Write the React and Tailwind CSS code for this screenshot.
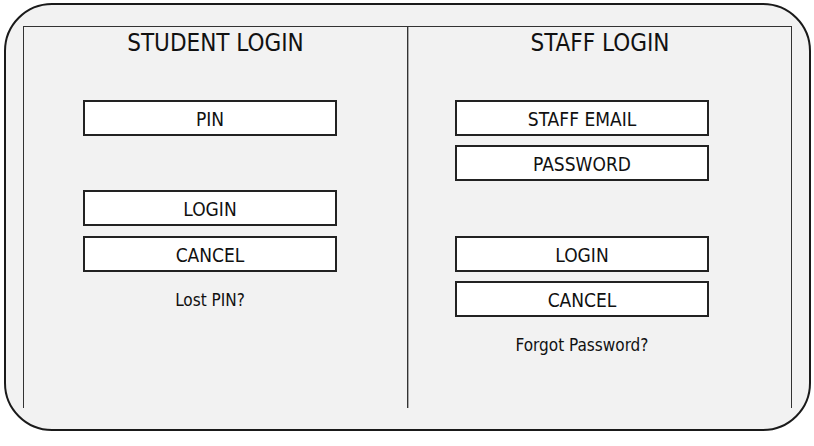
import React from "react";

const font = "font-['DejaVu_Sans_Condensed','DejaVu_Sans',sans-serif] font-stretch-condensed";

function Field({ label, className = "" }) {
  return (
    <div
      className={`w-[254px] h-[36px] bg-white border-2 border-[#222] flex items-center justify-center pt-[3px] text-[19px] leading-none text-[#111] ${className}`}
    >
      {label}
    </div>
  );
}

function StudentLogin() {
  return (
    <div className="flex flex-col border-r border-[#333]">
      <h2 className="mt-[4px] h-[24px] text-center text-[24px] leading-none text-[#111]">
        STUDENT LOGIN
      </h2>
      <div className="pl-[59px] flex flex-col">
        <Field label="PIN" className="mt-[45px]" />
        <Field label="LOGIN" className="mt-[54px]" />
        <Field label="CANCEL" className="mt-[10px]" />
        <p className="mt-[20px] w-[254px] text-center text-[17px] leading-none text-[#111]">
          Lost PIN?
        </p>
      </div>
    </div>
  );
}

function StaffLogin() {
  return (
    <div className="flex flex-col border-l border-[#aaa]">
      <h2 className="mt-[4px] h-[24px] text-center text-[24px] leading-none text-[#111]">
        STAFF LOGIN
      </h2>
      <div className="pl-[46px] flex flex-col">
        <Field label="STAFF EMAIL" className="mt-[45px]" />
        <Field label="PASSWORD" className="mt-[9px]" />
        <Field label="LOGIN" className="mt-[55px]" />
        <Field label="CANCEL" className="mt-[9px]" />
        <p className="mt-[20px] w-[254px] text-center text-[17px] leading-none text-[#111]">
          Forgot Password?
        </p>
      </div>
    </div>
  );
}

export default function App() {
  return (
    <div className={`w-[814px] h-[446px] bg-white overflow-hidden pt-[3px] pl-[4px] ${font}`}>
      <div className="w-[807px] h-[428px] rounded-[48px] border-2 border-[#1a1a1a] bg-[#f2f2f2] pl-[17px] pt-[21px]">
        <div className="w-[769px] h-[382px] border-t border-x border-[#333] grid grid-cols-[384px_1fr]">
          <StudentLogin />
          <StaffLogin />
        </div>
      </div>
    </div>
  );
}
